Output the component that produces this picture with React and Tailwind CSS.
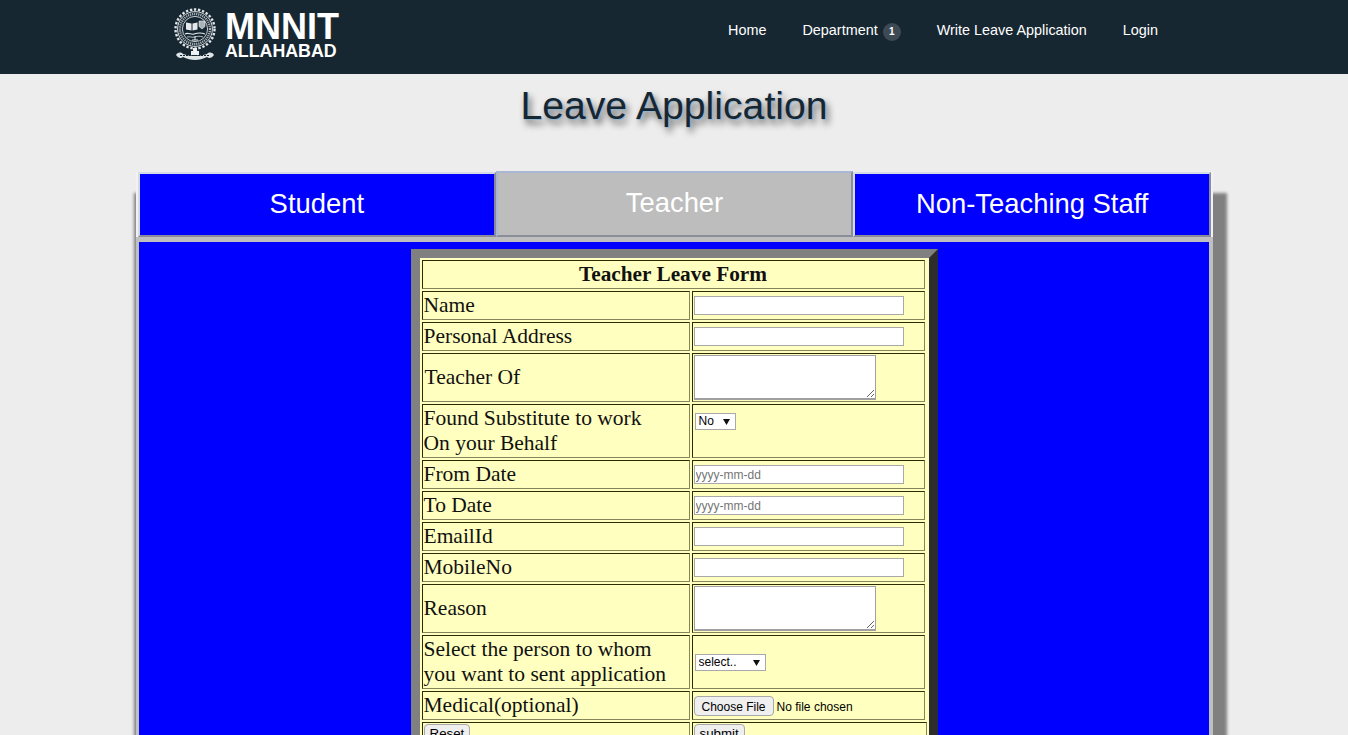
const sans = "font-['Liberation_Sans',Arial,sans-serif]";

function Emblem() {
  return (
    <svg width="44" height="56" viewBox="0 0 44 56" fill="none" className="shrink-0">
      <circle cx="21" cy="23" r="19.5" stroke="#dfe4e7" strokeWidth="2.4" strokeDasharray="2.4 1.7" />
      <circle cx="21" cy="23" r="17.4" stroke="#eef1f2" strokeWidth="0.9" />
      <circle cx="21" cy="23" r="15" stroke="#aab3b8" strokeWidth="2.4" strokeDasharray="1.2 0.9" />
      <circle cx="21" cy="23" r="12.6" stroke="#eef1f2" strokeWidth="0.8" />
      <path d="M12 16.5l5.5 1v7l-5.5-1z M18.5 17.5l5-1v7l-5 1z" fill="#e6e9eb" />
      <path d="M25 15h6v5.5l-3 2.5-3-2.5z" fill="#aab3b8" stroke="#fff" strokeWidth="0.5" />
      <path d="M11 28c3-2 6 1 9 0s6-2 11 0" stroke="#e6e9eb" strokeWidth="1.1" />
      <path d="M13 31c3-1 5 1 8 0s5-1 8 0" stroke="#c5cbcf" strokeWidth="0.9" />
      <path d="M21 34v-4M18 34h6" stroke="#fff" strokeWidth="0.9" />
      <path d="M2 49c2-3 5-3 7-1 4 1 7 2 12 2s8-1 12-2c2-2 5-2 7 1-2 3-5 4-7 2-4 2-8 3-12 3s-8-1-12-3c-2 2-5 1-7-2z" fill="#dfe4e7" />
      <path d="M6 49.5h30" stroke="#182832" strokeWidth="1" strokeDasharray="2 1" />
      <path d="M17 45h8v4h-8z M19 42h4v3h-4z" fill="#eef1f2" />
    </svg>
  );
}

const rowL = "border border-t-[#2c2c00] border-l-[#2c2c00] border-r-[#85855c] border-b-[#85855c] bg-[#ffffbf] p-px text-[21.5px] leading-[25px] text-[#111]";
const rowR = "border border-t-[#2c2c00] border-l-[#2c2c00] border-r-[#85855c] border-b-[#85855c] bg-[#ffffbf] p-px leading-[25px] w-[233px]";
const inputCls = "block w-[210px] h-[19px] border border-[#a9a9a9] bg-white px-px text-[12px] leading-normal font-['Liberation_Sans',Arial,sans-serif] text-black placeholder:text-[#757575]";
const areaCls = "block w-[182px] h-[45px] border border-[#a0a0a0] border-b-2 bg-white resize";
const selCls = "block h-[17px] pl-[3px] border border-[#a9a9a9] bg-white text-[12px] leading-[15px] font-['Liberation_Sans',Arial,sans-serif] text-black appearance-none rounded-none";
const btnCls = "block h-5 border border-[#a9a9a9] rounded-sm bg-[#efefef] px-[5px] text-[13.33px] leading-[18px] font-['Liberation_Sans',Arial,sans-serif] text-black";
const spacer = "p-0 w-0 border-0";

function Select({ w, label, top }) {
  return (
    <span className={"relative block w-fit ml-px" + (top ? " mt-[7px]" : "")}>
      <select className={selCls} style={{ width: w }}><option>{label}</option></select>
      <svg width="7" height="6" viewBox="0 0 7 6" className="absolute right-[6px] top-[6px] pointer-events-none">
        <path d="M0 0h7L3.5 6z" fill="#111" />
      </svg>
    </span>
  );
}

function Row({ label, children, valign }) {
  return (
    <tr>
      <td className={rowL}>{label}</td>
      <td className={rowR + (valign ? " align-top" : "")}>{children}</td>
      <td className={spacer}></td>
    </tr>
  );
}

export default function App() {
  return (
    <div className={`h-[735px] overflow-hidden bg-[#ededed] ${sans}`}>
      <header className="h-[74px] bg-[#172732] flex items-start justify-between pl-[174px] pr-[190px]">
        <div className="flex items-start gap-[7px] pt-[6px]">
          <Emblem />
          <div className="text-white font-bold">
            <div className="text-[36px] leading-[30px] mt-[6px]">MNNIT</div>
            <div className="text-[17.8px] leading-[18px]">ALLAHABAD</div>
          </div>
        </div>
        <nav className="flex items-center gap-9 text-[14.4px] text-white h-[61px]">
          <a>Home</a>
          <a className="flex items-center gap-[5px]">
            Department
            <span className="w-[18px] h-[18px] mt-[3px] rounded-full bg-[#3d4a54] text-[10px] font-bold flex items-center justify-center">1</span>
          </a>
          <a>Write Leave Application</a>
          <a>Login</a>
        </nav>
      </header>

      <h1 className="text-center text-[39.2px] leading-[44px] pt-[10px] h-[98px] text-[#172732] [text-shadow:1px_1px_1px_#8fb4cf,3px_5px_7px_#5a5a5a]">
        Leave Application
      </h1>

      <main className="w-[1077px] ml-[136px] bg-[#f2f2f2] shadow-[6px_29px_3px_8px_#808080]">
        <div className="flex h-[65px] px-[2px] items-end">
          <button className="flex-1 h-[65px] pb-[2px] bg-[#0000ff] text-white text-[27.4px] border-2 border-t-[#d5dbe6] border-l-[#d5dbe6] border-r-[#8a8a9a] border-b-[#8a8a9a]">Student</button>
          <button className="flex-1 h-[66px] pb-[2px] bg-[#bdbdbd] text-white text-[27.4px] border-2 border-t-[#a9b6d4] border-l-[#a9b6d4] border-r-[#8a8f9a] border-b-[#8a8f9a]">Teacher</button>
          <button className="flex-1 h-[65px] pb-[2px] bg-[#0000ff] text-white text-[27.4px] border-2 border-t-[#d5dbe6] border-l-[#d5dbe6] border-r-[#8a8a9a] border-b-[#8a8a9a]">Non-Teaching Staff</button>
        </div>
        <section className="border-l-[3px] border-r-[4px] border-t-[5px] border-[#bfbfbf] bg-[#0000ff] pt-[7px] pb-8">
          <table className="mx-auto w-[527px] bg-[#ffffbf] border-separate border-spacing-[2px] border-[9px] border-t-[#808080] border-l-[#808080] border-r-[#2d2d2d] border-b-[#2d2d2d] font-['Liberation_Serif','Times_New_Roman',serif]">
            <tbody>
              <tr>
                <td colSpan={2} className={rowL + " text-center font-bold !text-[21.3px]"}>Teacher Leave Form</td>
                <td className={spacer}></td>
              </tr>
              <Row label="Name"><input className={inputCls} /></Row>
              <Row label="Personal Address"><input className={inputCls} /></Row>
              <Row label={<span className="pl-px">Teacher Of</span>}><textarea className={areaCls} /></Row>
              <Row label={<>Found Substitute to work<br />On your Behalf</>} valign>
                <Select w={41} label="No" top />
              </Row>
              <Row label="From Date"><input className={inputCls} placeholder="yyyy-mm-dd" /></Row>
              <Row label="To Date"><input className={inputCls} placeholder="yyyy-mm-dd" /></Row>
              <Row label="EmailId"><input className={inputCls} /></Row>
              <Row label="MobileNo"><input className={inputCls} /></Row>
              <Row label="Reason"><textarea className={areaCls} /></Row>
              <Row label={<>Select the person to whom<br />you want to sent application</>}>
                <Select w={71} label="select.." />
              </Row>
              <Row label="Medical(optional)">
                <input type="file" className={`block h-5 leading-[20px] text-[12px] ${sans} text-black file:h-5 file:px-[7px] file:mr-[3px] file:border file:border-[#a9a9a9] file:rounded-sm file:bg-[#efefef] file:text-[12px]`} />
              </Row>
              <tr>
                <td className={rowL}><button className={btnCls}>Reset</button></td>
                <td colSpan={2} className={rowR}><button className={btnCls}>submit</button></td>
              </tr>
            </tbody>
          </table>
        </section>
      </main>
    </div>
  );
}
